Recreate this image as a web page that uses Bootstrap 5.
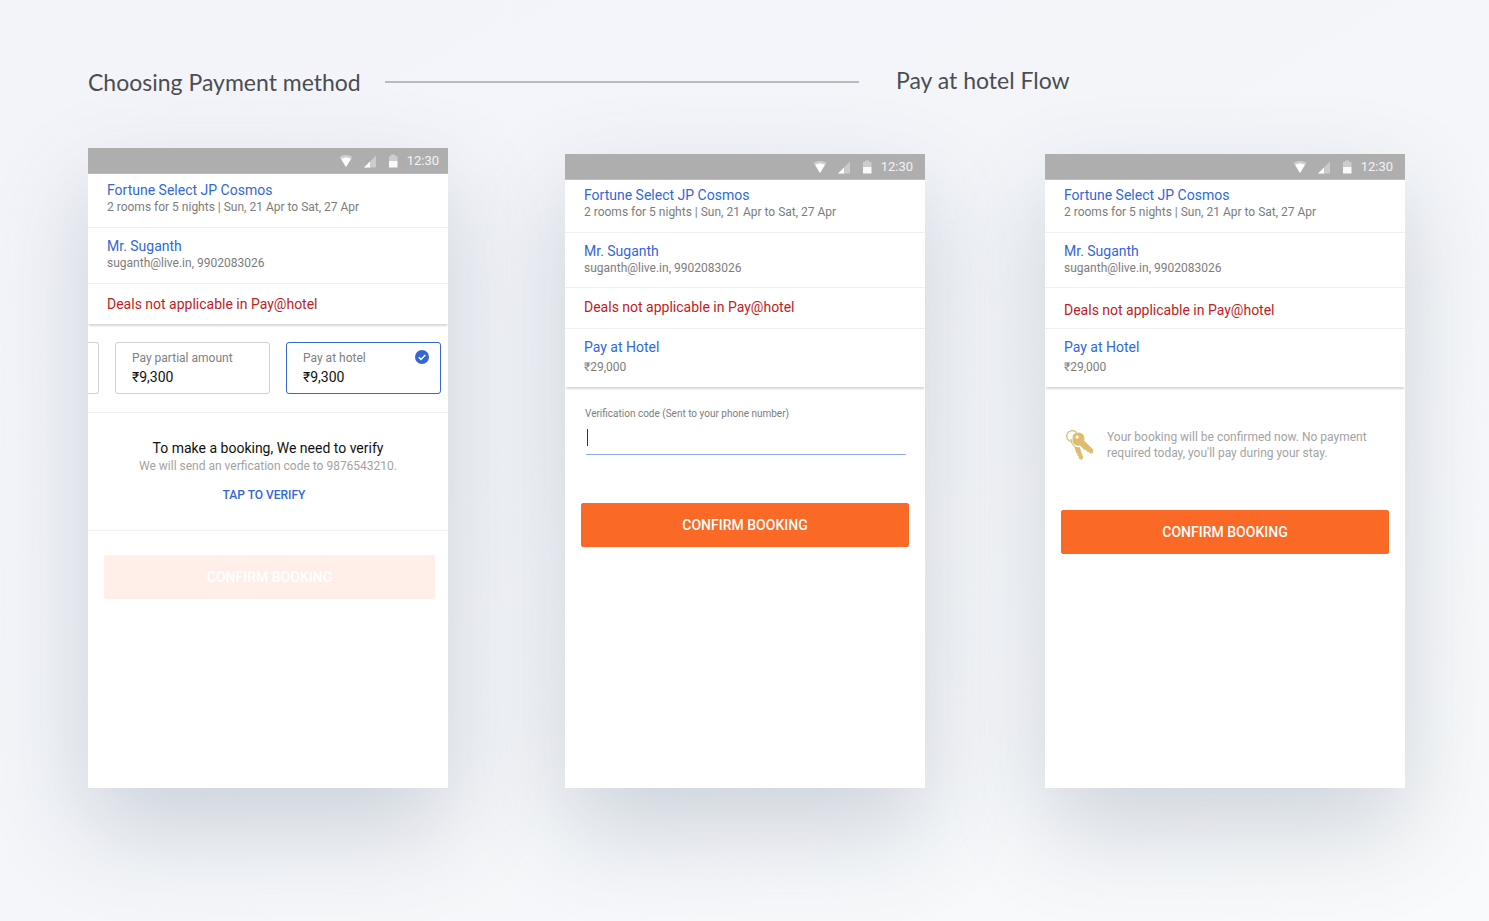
<!DOCTYPE html>
<html lang="en">
<head>
<meta charset="utf-8">
<meta name="viewport" content="width=device-width, initial-scale=1">
<title>Payment method and Pay at hotel flow</title>
<link href="https://cdn.jsdelivr.net/npm/bootstrap@5.3.0/dist/css/bootstrap.min.css" rel="stylesheet">
<style>
  :root { --blue: #3367d6; --orange: #fa6925; --hairline: #f0f0f0; }
  body {
    font-family: Roboto, "Liberation Sans", sans-serif;
    font-size: 14px; line-height: 17px; color: #111;
    min-height: 100vh;
    background: linear-gradient(150deg, #f3f4f9, #f3f5f9 40%, #f9fafb);
  }
  .board { padding: 64px 84px 100px 88px; }
  .board-head, .screens { display: grid; }
  .board-head { grid-template-columns: 771fr 509fr; column-gap: 37px; margin-bottom: 48px; }
  .board-title { font: 400 23px/36px Lato, sans-serif; color: #4b4d51; margin: 0; white-space: nowrap; }
  .title-flow { line-height: 32px; }
  .flow-line { height: 2px; background: #b9babd; }
  .screens { grid-template-columns: 477fr 480fr 360px; }
  .phone {
    width: 100%; max-width: 360px; min-height: 634px; background: #fff;
    box-shadow: 0 40px 90px rgba(76, 97, 120, .24);
  }
  .phone-tall { min-height: 640px; }
  .phone-short { margin-top: 6px; }
  .status { height: 26px; padding-right: 12px; background: #aeaeae; color: #f3f3f3; font-size: 13px; border-bottom: 1px solid #bcbcbc; }
  .phone-tall .status { padding-right: 9px; }
  .line { padding: 7px 19px 11px; border-bottom: 1px solid var(--hairline); }
  .line + .line { padding: 10px 19px; }
  .line + .line-note { padding: 11px 19px 12px; }
  .line + .line-low { padding: 14px 19px 9px; }
  .phone-tall .line:first-child { padding-top: 8px; }
  .phone-tall .line + .line { padding-bottom: 11px; }
  .phone-tall .line + .line-note { padding: 12px 19px 10px; }
  .summary { box-shadow: 0 3px 2px -1px rgba(0, 0, 0, .16); clip-path: inset(0 0 -6px 0); }
  .summary .line:last-child { border-bottom-color: transparent; }
  .head-text { color: var(--blue); font-size: 14px; font-weight: 400; line-height: 17px; margin: 0; }
  .sub-text { color: #7d7d7d; font-size: 12px; line-height: 17px; margin: 0; }
  .note-text { color: #c01c22; margin: 0; }
  .price-text { padding-top: 3px; }
  .tiles { gap: 16px; padding: 18px 7px 18px 0; border-bottom: 1px solid var(--hairline); overflow: hidden; }
  .tile { width: 155px; height: 52px; padding: 6px 16px; border: 1px solid #d2d2d2; border-radius: 3px; position: relative; cursor: pointer; font-size: 14px; line-height: 19px; }
  .tile small { display: block; font-size: 12px; line-height: 19px; color: #808080; }
  .tile-cut { width: 11px; height: 52px; border: 1px solid #d2d2d2; border-left: 0; border-radius: 0 3px 3px 0; margin-right: auto; }
  .btn-check:checked + .tile { border-color: var(--blue); }
  .tick { display: none; position: absolute; right: 11px; top: 7px; }
  .btn-check:checked + .tile .tick { display: block; }
  .verify { padding: 26px 16px; border-bottom: 1px solid var(--hairline); }
  .verify-title { font-size: 14px; line-height: 18px; font-weight: 400; margin: 0 0 1px; }
  .hint { color: #a3a3a3; font-size: 12px; line-height: 17px; margin: 0; }
  .link-verify { color: var(--blue); font-size: 12px; font-weight: 500; line-height: 17px; text-decoration: none; margin: 12px 8px 0 0; }
  .confirm {
    --bs-btn-bg: var(--orange); --bs-btn-border-color: var(--orange); --bs-btn-color: #fff;
    --bs-btn-hover-bg: #e95c1a; --bs-btn-hover-border-color: #e95c1a; --bs-btn-hover-color: #fff;
    --bs-btn-disabled-bg: #ffefe8; --bs-btn-disabled-border-color: #ffefe8; --bs-btn-disabled-color: #fff; --bs-btn-disabled-opacity: 1;
    --bs-btn-font-size: 14px; --bs-btn-font-weight: 500; --bs-btn-line-height: 17px; --bs-btn-border-radius: 2px;
    height: 44px;
  }
  .actions { padding: 0 16px; }
  .actions-tall { padding: 24px 13px 0 16px; }
  .code-label { font-size: 10px; line-height: 14px; color: #7d7d7d; }
  .code-box { padding: 20px 19px 48px 20px; }
  .code-input, .code-input:focus {
    height: 34px; border: 0; border-bottom: 1px solid #8aa9e8; border-radius: 0; padding: 0 5px; font-size: 14px; margin-left: 1px; width: 320px; max-width: 100%;
    background: linear-gradient(#333, #333) 1px 8px / 1px 17px no-repeat; box-shadow: none; caret-color: transparent;
  }
  .keys-box { padding: 42px 32px 49px 19px; gap: 11px; }
  .keys-box .hint { line-height: 16px; }
  @media (max-width: 1260px) {
    .board { padding: 40px 24px; }
    .board-head { grid-template-columns: 1fr; row-gap: 8px; }
    .screens { grid-template-columns: repeat(auto-fit, minmax(320px, 1fr)); gap: 48px; justify-items: center; }
    .phone-short { margin-top: 0; }
  }
</style>
</head>
<body>
<svg class="d-none" aria-hidden="true">
  <symbol id="status-icons" viewBox="0 0 60 16">
    <path d="M.5 4C4 1.200 10 1.200 13.500 4L7 14Z" fill="#cfcfcf"/>
    <path d="M2.200 6C5 4 9 4 11.800 6L7 14Z" fill="#fff"/>
    <path d="M25 14.500H37V2.500Z" fill="#cbcbcb"/><path d="M25 14.500H31V8.500Z" fill="#fff"/>
    <path d="M50 3H52V1.500H56V3H58.500V8H50Z" fill="#cdcdcd"/><path d="M50 8H58.500V14.500H50Z" fill="#fafafa"/>
  </symbol>
</svg>
<main class="board">
  <header class="board-head">
    <div class="d-flex align-items-center">
      <h1 class="board-title">Choosing Payment method</h1>
      <div class="flow-line flex-grow-1 ms-4"></div>
    </div>
    <h2 class="board-title title-flow">Pay at hotel Flow</h2>
  </header>
  <div class="screens">
    <section class="phone phone-tall" aria-label="Choose payment method">
      <div class="status d-flex align-items-center justify-content-end gap-2">
        <svg width="60" height="16" aria-hidden="true"><use href="#status-icons"/></svg><span>12:30</span>
      </div>
      <div class="summary">
        <div class="line"><h3 class="head-text">Fortune Select JP Cosmos</h3><p class="sub-text">2 rooms for 5 nights | Sun, 21 Apr to Sat, 27 Apr</p></div>
        <div class="line"><h3 class="head-text">Mr. Suganth</h3><p class="sub-text">suganth@live.in, 9902083026</p></div>
        <div class="line line-note"><p class="note-text">Deals not applicable in Pay@hotel</p></div>
      </div>
      <div class="tiles d-flex">
        <div class="tile-cut flex-shrink-0" aria-hidden="true"></div>
        <input class="btn-check" type="radio" name="pay" id="pay-partial">
        <label class="tile flex-shrink-0" for="pay-partial"><small>Pay partial amount</small>₹9,300</label>
        <input class="btn-check" type="radio" name="pay" id="pay-hotel" checked>
        <label class="tile flex-shrink-0" for="pay-hotel"><small>Pay at hotel</small>₹9,300
          <svg class="tick" width="14" height="14" viewBox="0 0 14 14" aria-hidden="true"><circle cx="7" cy="7" r="7" fill="#3367d6"/><path d="M3.800 7.300 6 9.400 10.300 4.900" fill="none" stroke="#fff" stroke-width="1.500"/></svg>
        </label>
      </div>
      <div class="verify d-flex flex-column align-items-center text-center">
        <h3 class="verify-title">To make a booking, We need to verify</h3>
        <p class="hint">We will send an verfication code to 9876543210.</p>
        <a class="link-verify" href="#code">TAP TO VERIFY</a>
      </div>
      <div class="actions-tall"><button class="btn confirm w-100" type="button" disabled>CONFIRM BOOKING</button></div>
    </section>

    <section class="phone phone-short" aria-label="Enter verification code">
      <div class="status d-flex align-items-center justify-content-end gap-2">
        <svg width="60" height="16" aria-hidden="true"><use href="#status-icons"/></svg><span>12:30</span>
      </div>
      <div class="summary">
        <div class="line"><h3 class="head-text">Fortune Select JP Cosmos</h3><p class="sub-text">2 rooms for 5 nights | Sun, 21 Apr to Sat, 27 Apr</p></div>
        <div class="line"><h3 class="head-text">Mr. Suganth</h3><p class="sub-text">suganth@live.in, 9902083026</p></div>
        <div class="line line-note"><p class="note-text">Deals not applicable in Pay@hotel</p></div>
        <div class="line"><h3 class="head-text">Pay at Hotel</h3><p class="sub-text price-text">₹29,000</p></div>
      </div>
      <div class="code-box">
        <label class="code-label d-block" for="code">Verification code (Sent to your phone number)</label>
        <input class="form-control code-input" id="code" type="text" inputmode="numeric" autocomplete="one-time-code">
      </div>
      <div class="actions"><button class="btn confirm w-100" type="button">CONFIRM BOOKING</button></div>
    </section>

    <section class="phone phone-short" aria-label="Confirm booking">
      <div class="status d-flex align-items-center justify-content-end gap-2">
        <svg width="60" height="16" aria-hidden="true"><use href="#status-icons"/></svg><span>12:30</span>
      </div>
      <div class="summary">
        <div class="line"><h3 class="head-text">Fortune Select JP Cosmos</h3><p class="sub-text">2 rooms for 5 nights | Sun, 21 Apr to Sat, 27 Apr</p></div>
        <div class="line"><h3 class="head-text">Mr. Suganth</h3><p class="sub-text">suganth@live.in, 9902083026</p></div>
        <div class="line line-note line-low"><p class="note-text">Deals not applicable in Pay@hotel</p></div>
        <div class="line"><h3 class="head-text">Pay at Hotel</h3><p class="sub-text price-text">₹29,000</p></div>
      </div>
      <div class="keys-box d-flex align-items-center">
        <svg class="flex-shrink-0" width="32" height="32" viewBox="0 0 32 32" fill="#e0bd6c" aria-hidden="true">
          <path d="M12.500 3.500A5.600 5.600 0 1 0 7.500 12.700" fill="none" stroke="#e0bd6c" stroke-width="1.300"/>
          <path fill-rule="evenodd" d="M8.600 7.300C9.400 4.300 12.800 2.800 16 3.700C19.700 4.800 21.300 8.300 20.200 11.800L29.200 20.600L29 24L26.200 24.500L24.900 22.900L23.300 23.100L22.300 21.200L20.600 21L16 16.500C13 17.500 9.800 15.800 8.600 13ZM12.800 6.500A1.600 1.600 0 1 0 14.500 8.900A1.600 1.600 0 0 0 12.800 6.500Z"/>
          <path d="M9.800 16.600C11.500 18.200 13.700 18.600 15.600 18L19.200 28.400L17.500 30.800L14.900 29.700L14.900 27.700L13.400 26.600L13.600 24.900L12.200 23.700Z"/>
          <path d="M7 10C7 12.800 8 15 10 17" fill="none" stroke="#e0bd6c" stroke-width="1.200"/>
        </svg>
        <p class="hint">Your booking will be confirmed now. No payment required today, you'll pay during your stay.</p>
      </div>
      <div class="actions"><button class="btn confirm w-100" type="button">CONFIRM BOOKING</button></div>
    </section>
  </div>
</main>
<script src="https://cdn.jsdelivr.net/npm/bootstrap@5.3.0/dist/js/bootstrap.bundle.min.js"></script>
</body>
</html>
